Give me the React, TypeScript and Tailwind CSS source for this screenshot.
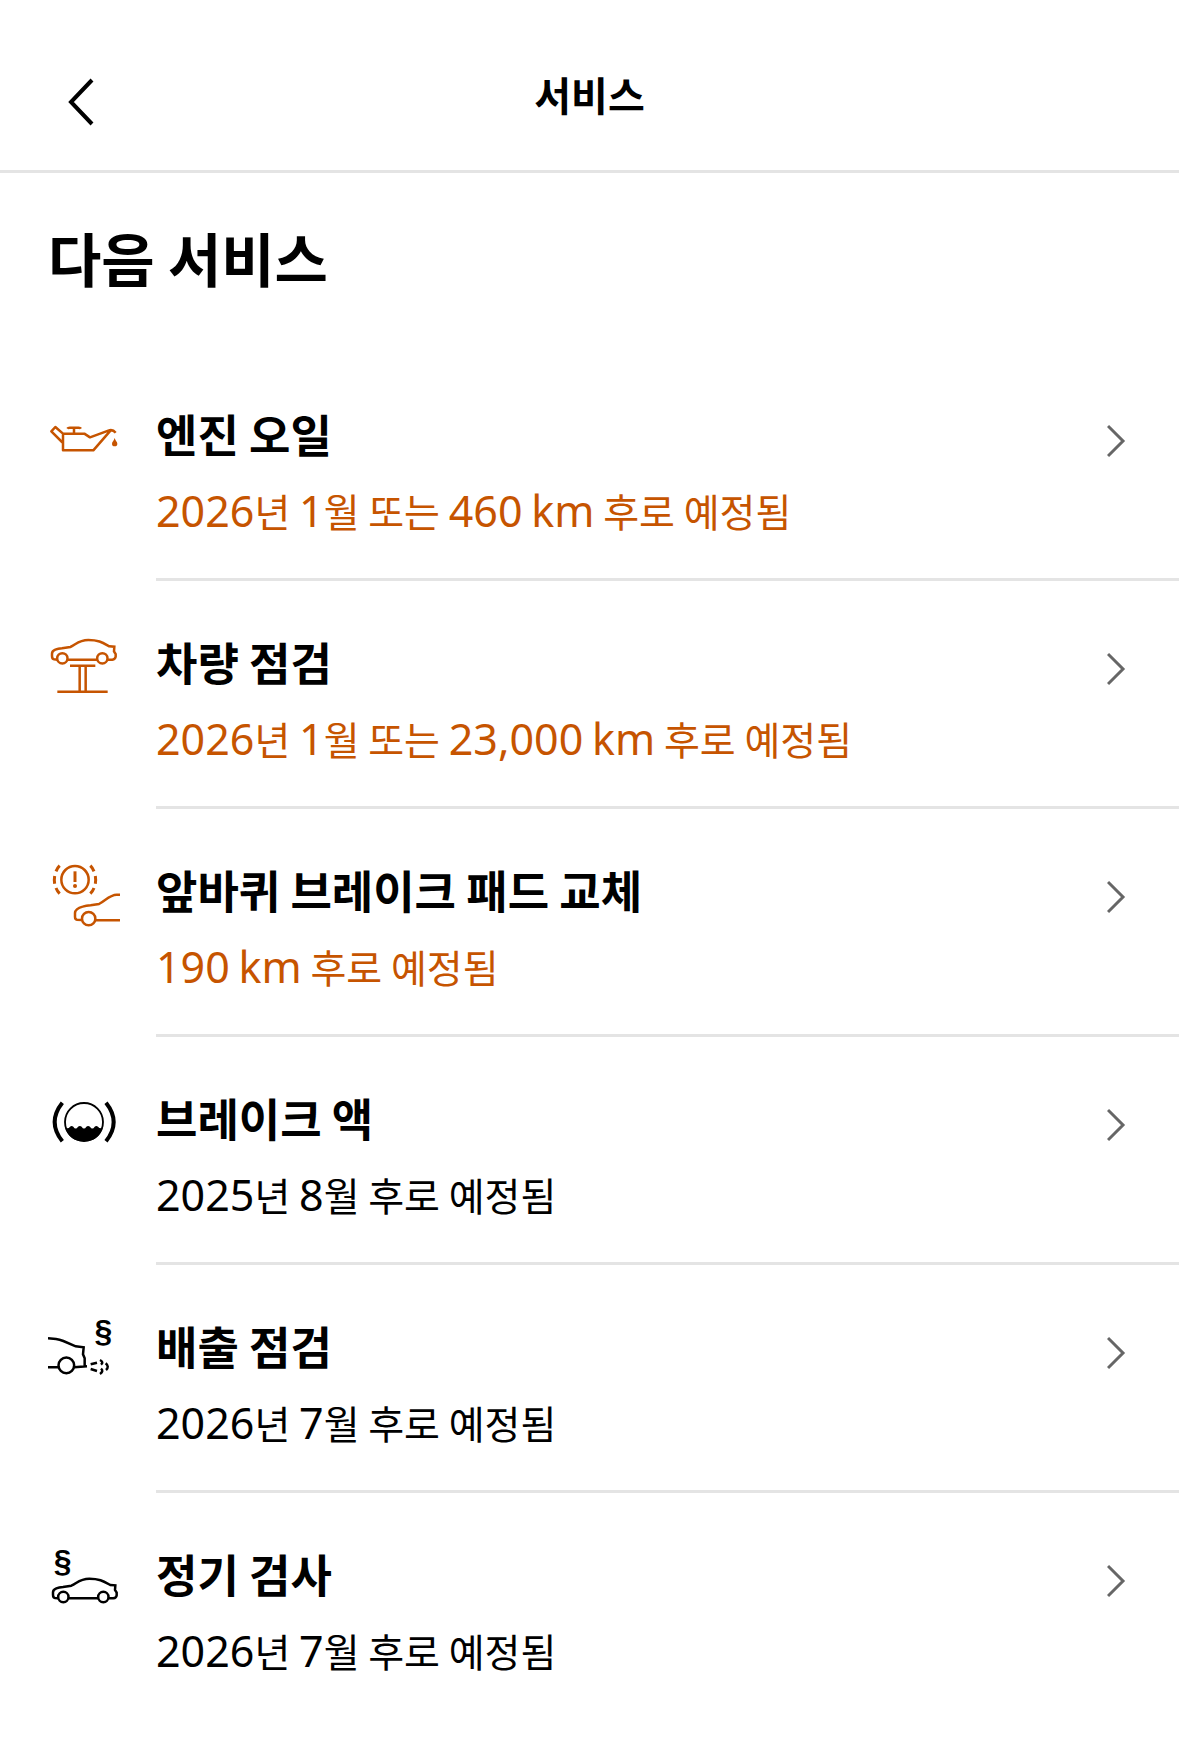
import type { ReactNode } from 'react';

interface ServiceItem {
  title: string;
  due: string;
  urgent?: boolean;
  icon: ReactNode;
}

const SideCar = () => (
  <>
    <path d="M52 119L42 118Q36 117 36 108V101Q36 93 46 89Q54 86 66 85L91 81C108 74 115 60 145 60C176 60 188 68 208 79L223 80L222 94L227 102V110Q226 118 217 119H204M83 119H171" />
    <circle cx="67" cy="115" r="15.5" />
    <circle cx="187" cy="115" r="15.5" />
  </>
);

interface IconProps {
  viewBox: string;
  children: ReactNode;
}

const Icon = ({ viewBox, children }: IconProps) => (
  <svg viewBox={viewBox} className="size-[72px] shrink-0" fill="none" stroke="currentColor" strokeWidth="7.5" aria-hidden="true">
    {children}
  </svg>
);

const Section = ({ x, y }: { x: number; y: number }) => (
  <text x={x} y={y} textAnchor="middle" fill="currentColor" stroke="none" className="font-['Liberation_Sans',sans-serif] text-[96px] font-bold">
    §
  </text>
);

const OilIcon = () => (
  <Icon viewBox="24 6 216 216">
    <path strokeLinejoin="round" d="M69 101H133L150 112L205 92Q218 87 227 98M212 91L160 151H69V101M69 129L34 94L46 81L69 101M102 84V100" />
    <path d="M82 86Q84 83 89 83H116Q121 83 123 86" />
    <path fill="currentColor" stroke="none" d="M224 114C226 123 232 125 232 131A8 8 0 0 1 216 131C216 125 222 123 224 114Z" />
  </Icon>
);

const LiftIcon = () => (
  <Icon viewBox="24 30 216 216">
    <SideCar />
    <path d="M90 137H166M119 139V214M137 139V214M52 215H203" />
  </Icon>
);

const BrakePadIcon = () => (
  <Icon viewBox="24 24 216 216">
    <circle cx="105" cy="89" r="41" />
    <path strokeWidth="9" d="M105 64V96" />
    <circle cx="105" cy="108" r="6" fill="currentColor" stroke="none" />
    <path strokeWidth="9" d="M59 47Q52 54 48 64M44 78Q42 89 44 101M48 114Q52 124 59 131M151 47Q158 54 162 64M166 78Q168 89 166 101M162 114Q158 124 151 131" />
    <path d="M125 210L111 209Q105 208 105 200V189Q106 176 128 170Q138 167 152 166L177 162C197 151 210 134 230 134H240M166 211H240" />
    <circle cx="146" cy="206" r="20" />
  </Icon>
);

const BrakeFluidIcon = () => (
  <Icon viewBox="24 18 216 216">
    <circle cx="132" cy="126" r="57" strokeWidth="5.5" />
    <path fill="currentColor" stroke="none" d="M76 144Q87 146 90 140Q95 136 100 140Q107 151 114 140Q120 136 125 140Q132 151 139 140Q144 136 150 140Q157 151 164 140Q169 136 174 140Q178 146 188 144Q176 184 132 184Q88 184 76 144Z" />
    <path strokeWidth="12" d="M67 68Q21 126 67 184M198 68Q244 126 198 184" />
  </Icon>
);

const EmissionIcon = () => (
  <Icon viewBox="24 42 216 216">
    <path d="M24 115L48 117Q58 118 70 123L107 139L131 142L129 163L134 175V198M103 202L141 199M24 202H55" />
    <circle cx="79" cy="196" r="23.5" />
    <path d="M152 193L171 188M152 207L171 213M180 180Q192 186 183 194M197 190Q209 200 198 210M183 206Q192 214 180 222" />
    <Section x={190} y={125} />
  </Icon>
);

const InspectionIcon = () => (
  <Icon viewBox="24 36 216 216">
    <g transform="translate(3 86)">
      <SideCar />
    </g>
    <Section x={68} y={125} />
  </Icon>
);

const services: ServiceItem[] = [
  { title: '엔진 오일', due: '2026년 1월 또는 460 km 후로 예정됨', urgent: true, icon: <OilIcon /> },
  { title: '차량 점검', due: '2026년 1월 또는 23,000 km 후로 예정됨', urgent: true, icon: <LiftIcon /> },
  { title: '앞바퀴 브레이크 패드 교체', due: '190 km 후로 예정됨', urgent: true, icon: <BrakePadIcon /> },
  { title: '브레이크 액', due: '2025년 8월 후로 예정됨', icon: <BrakeFluidIcon /> },
  { title: '배출 점검', due: '2026년 7월 후로 예정됨', icon: <EmissionIcon /> },
  { title: '정기 검사', due: '2026년 7월 후로 예정됨', icon: <InspectionIcon /> },
];

// Numbers and units are set a little larger than the Hangul around them
const DueText = ({ text }: { text: string }) => (
  <>
    {text.split(/([0-9A-Za-z,]+)/).map((part, i) =>
      i % 2 === 1 ? (
        <span key={i} className="font-['Noto_Sans',sans-serif] text-[43px]">{part}</span>
      ) : (
        part
      ),
    )}
  </>
);

const ServiceRow = ({ title, due, urgent, icon }: ServiceItem) => (
  <li className="group">
    <a href="#" className="flex gap-9 pl-12">
      <span className={`pt-[49px] ${urgent ? 'text-[#c65400]' : 'text-black'}`}>{icon}</span>
      <span className="flex min-w-0 flex-1 items-start border-b-3 border-[#e4e4e4] pt-12 pr-12 pb-9 group-last:border-transparent">
        <span className="min-w-0 flex-1">
          <span className="block text-[45px] leading-[66px] font-bold text-black">{title}</span>
          <span className={`mt-3 block text-[39px] leading-[63px] ${urgent ? 'text-[#c65400]' : 'text-black'}`}>
            <DueText text={due} />
          </span>
        </span>
        <svg viewBox="0 0 24 36" className="mt-[22px] h-9 w-6 shrink-0" fill="none" stroke="#666" strokeWidth="3" aria-hidden="true">
          <path d="M1 3L16 18L1 33" />
        </svg>
      </span>
    </a>
  </li>
);

export default function App() {
  return (
    <div className="min-h-screen bg-white font-['Noto_Sans_CJK_KR',sans-serif] text-black">
      <header className="grid grid-cols-[1fr_auto_1fr] items-start border-b-3 border-[#e4e4e4] px-12 pt-16 pb-9">
        <button type="button" aria-label="뒤로" className="mt-1.5 flex size-16 items-center justify-center">
          <svg viewBox="0 0 28 48" className="h-12 w-7" fill="none" stroke="currentColor" strokeWidth="4" aria-hidden="true">
            <path d="M26 2L5 24L26 46" />
          </svg>
        </button>
        <h1 className="text-[40px] leading-[60px] font-bold">서비스</h1>
      </header>
      <main>
        <h2 className="px-12 pt-10 pb-13 text-[58px] leading-[88px] font-bold">다음 서비스</h2>
        <ul>
          {services.map(service => (
            <ServiceRow key={service.title} {...service} />
          ))}
        </ul>
      </main>
    </div>
  );
}
